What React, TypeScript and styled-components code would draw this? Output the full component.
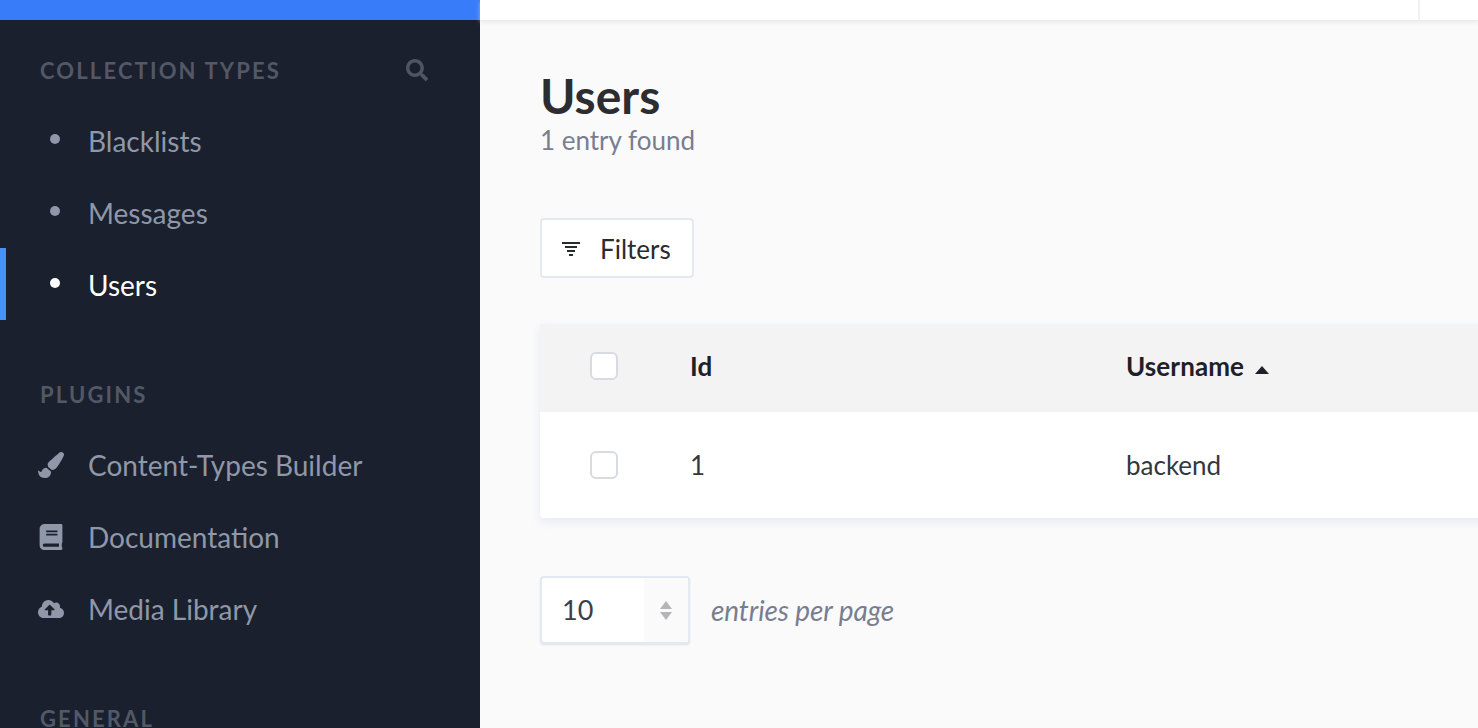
import { ReactNode } from "react";
import styled, { createGlobalStyle } from "styled-components";
import { FaSearch, FaPaintBrush, FaBook, FaCloudUploadAlt } from "react-icons/fa";

const GlobalStyle = createGlobalStyle`
    html, body {
        margin: 0;
        padding: 0;
        height: 100%;
        overflow: hidden;
    }
    body {
        font-family: Lato, "Liberation Sans", sans-serif;
        color: #292b2c;
    }
`;

interface NavItemProp {
    label: string;
    active?: boolean;
    icon?: ReactNode;
}

const NavItem = ({ label, active, icon }: NavItemProp) => (
    <NavRow $active={active} $hasIcon={!!icon}>
        <NavIcon>{icon ?? <Dot $active={active} />}</NavIcon>
        {label}
    </NavRow>
);

const App = () => {
    return (
        <Page>
            <GlobalStyle />
            <Sidebar>
                <Brand />
                <SectionHead $top={0} $pad={16}>
                    <SectionTitle>Collection Types</SectionTitle>
                    <FaSearch size={22} color="#4f5563" />
                </SectionHead>
                <NavItem label="Blacklists" />
                <NavItem label="Messages" />
                <NavItem label="Users" active />

                <SectionHead $top={26} $pad={12}>
                    <SectionTitle>Plugins</SectionTitle>
                </SectionHead>
                <NavItem label="Content-Types Builder" icon={<FaPaintBrush size={26} />} />
                <NavItem label="Documentation" icon={<FaBook size={26} />} />
                <NavItem label="Media Library" icon={<FaCloudUploadAlt size={26} />} />

                <SectionHead $top={24} $pad={12}>
                    <SectionTitle>General</SectionTitle>
                </SectionHead>
            </Sidebar>

            <Main>
                <TopBar>
                    <TopDivider />
                </TopBar>
                <Content>
                    <Title>Users</Title>
                    <Subtitle>1 entry found</Subtitle>

                    <FilterButton>
                        <svg width="18" height="14" viewBox="0 0 18 14" fill="#292b2c">
                            <rect x="0" y="0" width="18" height="2" />
                            <rect x="3" y="4" width="12" height="2" />
                            <rect x="5" y="8" width="8" height="2" />
                            <rect x="7" y="12" width="4" height="2" />
                        </svg>
                        Filters
                    </FilterButton>

                    <Table>
                        <HeadRow>
                            <CheckCell><Checkbox /></CheckCell>
                            <IdCell>Id</IdCell>
                            <NameCell>
                                Username
                                <SortArrow />
                            </NameCell>
                        </HeadRow>
                        <BodyRow>
                            <CheckCell><Checkbox /></CheckCell>
                            <IdCell>1</IdCell>
                            <NameCell>backend</NameCell>
                        </BodyRow>
                    </Table>

                    <PageSize>
                        <SizeSelect>
                            <SizeValue>10</SizeValue>
                            <SizeArrows>
                                <ArrowUp />
                                <ArrowDown />
                            </SizeArrows>
                        </SizeSelect>
                        <SizeLabel>entries per page</SizeLabel>
                    </PageSize>
                </Content>
            </Main>
        </Page>
    );
};

const Page = styled.div`
    display: flex;
    width: 1478px;
    height: 728px;
    overflow: hidden;
`;

const Sidebar = styled.nav`
    flex: 0 0 480px;
    background: #1a202e;
    overflow: hidden;
`;

const Brand = styled.div`
    height: 20px;
    background: #387cf9;
`;

const SectionHead = styled.div<{ $top: number; $pad: number }>`
    display: flex;
    align-items: center;
    justify-content: space-between;
    box-sizing: border-box;
    height: 84px;
    padding: ${p => p.$pad}px 52px 0 40px;
    margin-top: ${p => p.$top}px;
`;

const SectionTitle = styled.h3`
    margin: 0;
    font-size: 22px;
    font-weight: 700;
    letter-spacing: 2.15px;
    text-transform: uppercase;
    color: #525866;
`;

const NavRow = styled.div<{ $active?: boolean; $hasIcon?: boolean }>`
    display: flex;
    align-items: center;
    box-sizing: border-box;
    height: 72px;
    padding-left: ${p => (p.$active ? "32px" : "38px")};
    padding-top: ${p => (p.$hasIcon ? "0" : "1px")};
    padding-bottom: ${p => (p.$hasIcon ? "2px" : "0")};
    border-left: ${p => (p.$active ? "6px solid #4295f7" : "0 none")};
    font-size: 28px;
    color: ${p => (p.$active ? "#ffffff" : "#8f97a8")};
`;

const NavIcon = styled.span`
    display: flex;
    justify-content: center;
    align-items: center;
    width: 26px;
    margin-right: 24px;
`;

const Dot = styled.span<{ $active?: boolean }>`
    width: 10px;
    height: 10px;
    margin: -4px 0 0 8px;
    border-radius: 50%;
    background: ${p => (p.$active ? "#ffffff" : "#8f97a8")};
`;

const Main = styled.main`
    flex: 1;
    min-width: 0;
    background: #fafafb;
`;

const TopBar = styled.header`
    display: flex;
    justify-content: flex-end;
    height: 20px;
    background: #fff;
    box-shadow: 0 2px 4px rgba(219, 219, 219, 0.6);
`;

const TopDivider = styled.div`
    width: 2px;
    margin-right: 58px;
    background: #f1f1f2;
`;

const Content = styled.div`
    padding: 48px 0 0 60px;
`;

const Title = styled.h1`
    margin: 0;
    font-size: 48px;
    line-height: 56px;
    font-weight: 700;
    color: #2c2d30;
`;

const Subtitle = styled.p`
    margin: 0;
    font-size: 26px;
    line-height: 32px;
    color: #787e8f;
`;

const FilterButton = styled.button`
    display: flex;
    align-items: center;
    gap: 20px;
    box-sizing: border-box;
    width: 154px;
    height: 60px;
    margin-top: 62px;
    padding: 2px 0 0 20px;
    border: 2px solid #e3e9f3;
    border-radius: 4px;
    background: #fff;
    font-family: inherit;
    font-size: 26px;
    color: #292b2c;
`;

const Table = styled.div`
    margin-top: 46px;
    width: 1000px;
    background: #fff;
    box-shadow: 0 4px 8px rgba(227, 233, 243, 0.9);
    border-radius: 4px 0 0 4px;
`;

const HeadRow = styled.div`
    display: flex;
    align-items: center;
    box-sizing: border-box;
    height: 88px;
    padding-bottom: 4px;
    background: #f3f3f4;
    font-size: 26px;
    font-weight: 700;
    letter-spacing: 0.1px;
    color: #1f2027;
`;

const BodyRow = styled.div`
    display: flex;
    align-items: center;
    height: 106px;
    font-size: 26px;
    color: #333740;
`;

const CheckCell = styled.div`
    display: flex;
    width: 150px;
    padding-left: 50px;
    box-sizing: border-box;
`;

const Checkbox = styled.span`
    box-sizing: border-box;
    width: 28px;
    height: 28px;
    border: 2px solid #d8dbe2;
    border-radius: 6px;
    background: #fff;
`;

const IdCell = styled.div`
    width: 436px;
`;

const NameCell = styled.div`
    display: flex;
    align-items: center;
`;

const SortArrow = styled.span`
    width: 0;
    height: 0;
    margin: 8px 0 0 11px;
    border-left: 7px solid transparent;
    border-right: 7px solid transparent;
    border-bottom: 8px solid #1f2027;
`;

const PageSize = styled.div`
    display: flex;
    align-items: center;
    gap: 21px;
    margin-top: 58px;
`;

const SizeSelect = styled.div`
    display: flex;
    box-sizing: border-box;
    width: 150px;
    height: 68px;
    border: 2px solid #e3e9f3;
    border-radius: 4px;
    background: #fff;
    box-shadow: 0 1px 2px #dbe0ea;
`;

const SizeValue = styled.div`
    flex: 1;
    padding-left: 20px;
    font-size: 27px;
    line-height: 64px;
    color: #3b3f49;
`;

const SizeArrows = styled.div`
    display: flex;
    flex-direction: column;
    align-items: center;
    justify-content: center;
    gap: 3px;
    width: 44px;
    background: #fafafb;
`;

const ArrowUp = styled.span`
    border-left: 6px solid transparent;
    border-right: 6px solid transparent;
    border-bottom: 8px solid #b3b5b9;
`;

const ArrowDown = styled.span`
    border-left: 6px solid transparent;
    border-right: 6px solid transparent;
    border-top: 8px solid #b3b5b9;
`;

const SizeLabel = styled.span`
    font-size: 28px;
    font-style: italic;
    letter-spacing: -0.1px;
    color: #787e8f;
`;

export default App;
